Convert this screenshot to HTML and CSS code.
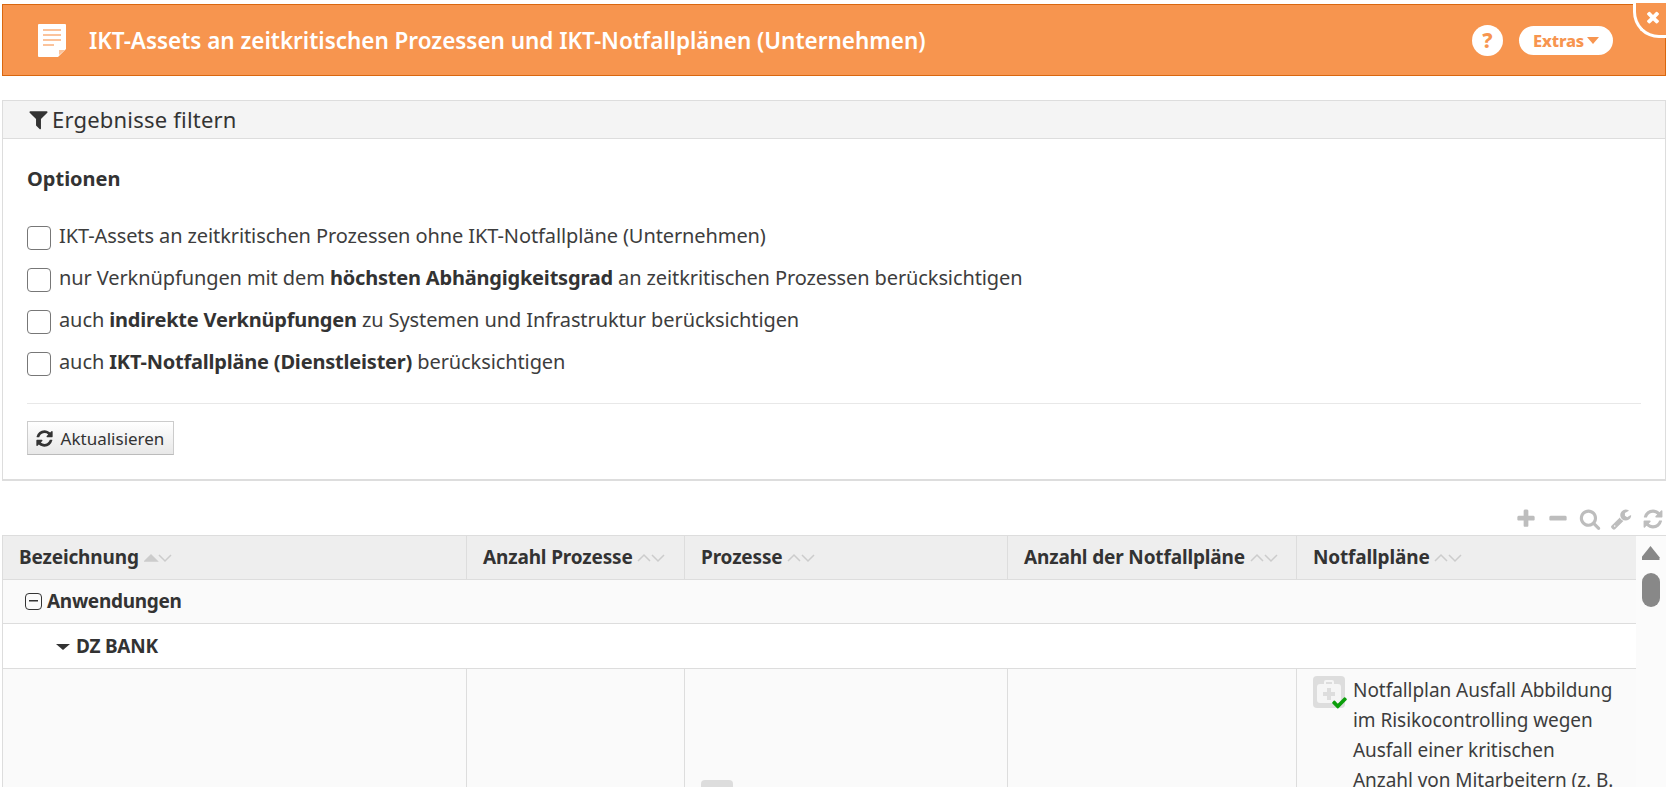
FILE: index.html
```html
<!DOCTYPE html>
<html lang="de">
<head>
<meta charset="utf-8">
<title>IKT-Assets</title>
<link rel="stylesheet" href="styles.css">
</head>
<body>
<svg class="defs" width="0" height="0" aria-hidden="true">
  <symbol id="i-refresh" viewBox="0 0 1792 1792"><path d="M1639 1056q0 5-1 7-64 268-268 434.5t-478 166.5q-146 0-282.5-55t-243.5-157l-129 129q-19 19-45 19t-45-19-19-45v-448q0-26 19-45t45-19h448q26 0 45 19t19 45-19 45l-137 137q71 66 161 102t187 36q134 0 250-65t186-179q11-17 53-117 8-23 30-23h192q13 0 22.5 9.5t9.5 22.5zm25-800v448q0 26-19 45t-45 19h-448q-26 0-45-19t-19-45 19-45l138-138q-148-137-349-137-134 0-250 65t-186 179q-11 17-53 117-8 23-30 23h-199q-13 0-22.5-9.5t-9.5-22.5v-7q65-268 270-434.5t480-166.5q146 0 284 55.5t245 156.5l130-129q19-19 45-19t45 19 19 45z"/></symbol>
  <symbol id="i-filter" viewBox="0 0 1792 1792"><path d="M1595 295q17 41-14 70l-493 493v742q0 42-39 59-13 5-25 5-27 0-45-19l-256-256q-19-19-19-45v-486l-493-493q-31-29-14-70 17-39 59-39h1280q42 0 59 39z"/></symbol>
  <symbol id="i-search" viewBox="0 0 1792 1792"><path d="M1216 832q0-185-131.5-316.5t-316.5-131.5-316.5 131.5-131.5 316.5 131.5 316.5 316.5 131.5 316.5-131.5 131.5-316.5zm512 832q0 52-38 90t-90 38q-54 0-90-38l-343-342q-179 124-399 124-143 0-273.5-55.5t-225-150-150-225-55.5-273.5 55.5-273.5 150-225 225-150 273.5-55.5 273.5 55.5 225 150 150 225 55.5 273.5q0 220-124 399l343 343q37 37 37 90z"/></symbol>
  <symbol id="i-wrench" viewBox="0 0 1792 1792"><path d="M448 1472q0-26-19-45t-45-19-45 19-19 45 19 45 45 19 45-19 19-45zm644-420l-682 682q-37 37-90 37-52 0-91-37l-106-108q-38-36-38-90 0-53 38-91l681-681q39 98 114.5 173.5t173.5 114.5zm634-435q0 39-23 106-47 134-164.5 217.5t-258.5 83.5q-185 0-316.5-131.5t-131.5-316.5 131.5-316.5 316.5-131.5q58 0 121.5 16.5t107.5 46.5q16 11 16 28t-16 28l-293 169v224l193 107q5-3 79-48.5t135.5-81 70.5-35.5q15 0 23.5 10t8.5 25z"/></symbol>
  <symbol id="i-plus" viewBox="0 0 1792 1792"><path d="M1600 736v192q0 40-28 68t-68 28h-416v416q0 40-28 68t-68 28h-192q-40 0-68-28t-28-68v-416h-416q-40 0-68-28t-28-68v-192q0-40 28-68t68-28h416v-416q0-40 28-68t68-28h192q40 0 68 28t28 68v416h416q40 0 68 28t28 68z"/></symbol>
  <symbol id="i-minus" viewBox="0 0 1792 1792"><path d="M1600 736v192q0 40-28 68t-68 28h-1216q-40 0-68-28t-28-68v-192q0-40 28-68t68-28h1216q40 0 68 28t28 68z"/></symbol>
  <symbol id="i-times" viewBox="0 0 1792 1792"><path d="M1490 1322q0 40-28 68l-136 136q-28 28-68 28t-68-28l-294-294-294 294q-28 28-68 28t-68-28l-136-136q-28-28-28-68t28-68l294-294-294-294q-28-28-28-68t28-68l136-136q28-28 68-28t68 28l294 294 294-294q28-28 68-28t68 28l136 136q28 28 28 68t-28 68l-294 294 294 294q28 28 28 68z"/></symbol>
  <symbol id="i-check" viewBox="0 0 1792 1792"><path d="M1671 566q0 40-28 68l-724 724-136 136q-28 28-68 28t-68-28l-136-136-362-362q-28-28-28-68t28-68l136-136q28-28 68-28t68 28l294 295 656-657q28-28 68-28t68 28l136 136q28 28 28 68z"/></symbol>
  <symbol id="i-sort" viewBox="0 0 28 14"><path d="M1 10 L7 4 L13 10"/><path d="M15 4 L21 10 L27 4"/></symbol>
  <symbol id="i-sort-asc" viewBox="0 0 28 14"><path class="filled" d="M1 10 L7 4 L13 10z"/><path d="M15 4 L21 10 L27 4"/></symbol>
</svg>

<header class="titlebar">
  <svg class="doc-icon" viewBox="0 0 28 33"><path class="doc-sheet" d="M1 0H27a1 1 0 0 1 1 1V25L20 33H1a1 1 0 0 1-1-1V1a1 1 0 0 1 1-1z"/><path class="doc-lines" d="M5 6H23M5 11H23M5 16H23M5 21H16"/><path class="doc-fold" d="M21 31V26H27z"/></svg>
  <h1 class="title">IKT-Assets an zeitkritischen Prozessen und IKT-Notfallplänen (Unternehmen)</h1>
  <div class="title-actions">
    <span class="help">?</span>
    <span class="extras">Extras<i class="caret-down"></i></span>
  </div>
  <span class="close"><svg class="close-x"><use href="#i-times"/></svg></span>
</header>

<section class="panel">
  <h2 class="panel-head"><svg class="filter-icon"><use href="#i-filter"/></svg>Ergebnisse filtern</h2>
  <div class="panel-body">
    <h3 class="options-title">Optionen</h3>
    <label class="option"><span class="box"></span><span>IKT-Assets an zeitkritischen Prozessen ohne IKT-Notfallpläne (Unternehmen)</span></label>
    <label class="option"><span class="box"></span><span>nur Verknüpfungen mit dem <b>höchsten Abhängigkeitsgrad</b> an zeitkritischen Prozessen berücksichtigen</span></label>
    <label class="option"><span class="box"></span><span>auch <b>indirekte Verknüpfungen</b> zu Systemen und Infrastruktur berücksichtigen</span></label>
    <label class="option"><span class="box"></span><span>auch <b>IKT-Notfallpläne (Dienstleister)</b> berücksichtigen</span></label>
    <hr class="rule">
    <button class="refresh-btn"><svg class="refresh-icon"><use href="#i-refresh"/></svg>Aktualisieren</button>
  </div>
</section>

<div class="toolbar">
  <svg class="tool"><use href="#i-plus"/></svg>
  <svg class="tool"><use href="#i-minus"/></svg>
  <svg class="tool"><use href="#i-search"/></svg>
  <svg class="tool"><use href="#i-wrench"/></svg>
  <svg class="tool"><use href="#i-refresh"/></svg>
</div>

<div class="grid-wrap">
  <table class="grid">
    <colgroup>
      <col class="c1"><col class="c2"><col class="c3"><col class="c4"><col class="c5">
    </colgroup>
    <thead>
      <tr>
        <th class="first">Bezeichnung <svg class="sort"><use href="#i-sort-asc"/></svg></th>
        <th>Anzahl Prozesse <svg class="sort"><use href="#i-sort"/></svg></th>
        <th>Prozesse <svg class="sort"><use href="#i-sort"/></svg></th>
        <th>Anzahl der Notfallpläne <svg class="sort"><use href="#i-sort"/></svg></th>
        <th>Notfallpläne <svg class="sort"><use href="#i-sort"/></svg></th>
      </tr>
    </thead>
    <tbody>
      <tr class="group"><td colspan="5"><span class="collapse"></span>Anwendungen</td></tr>
      <tr class="subgroup"><td colspan="5"><i class="caret-sub"></i>DZ BANK</td></tr>
      <tr class="data">
        <td></td>
        <td></td>
        <td class="proc-cell"><span class="proc-icon"></span><span class="proc-text">Abbildung</span></td>
        <td></td>
        <td class="plan-cell">
          <div class="plan">
            <span class="plan-icon">
              <svg class="kit" viewBox="0 0 32 32"><path d="M11 8V6a2 2 0 0 1 2-2h6a2 2 0 0 1 2 2v2h4a3 3 0 0 1 3 3v13a3 3 0 0 1-3 3H7a3 3 0 0 1-3-3V11a3 3 0 0 1 3-3zm2 0h6V6h-6z" fill-rule="evenodd"/><path class="kit-cross" d="M14 12h4v4h4v4h-4v4h-4v-4h-4v-4h4z"/></svg>
              <svg class="tick"><use href="#i-check"/></svg>
            </span>
            <span class="plan-text">Notfallplan Ausfall Abbildung im Risikocontrolling wegen Ausfall einer kritischen Anzahl von Mitarbeitern (z. B. Pandemie)</span>
          </div>
        </td>
      </tr>
    </tbody>
  </table>
  <div class="scroll">
    <i class="scroll-up"></i>
    <i class="scroll-thumb"></i>
  </div>
</div>
</body>
</html>
```

FILE: styles.css
```css
* { box-sizing: border-box; }
html, body { height: 100%; }
body {
  margin: 0;
  padding: 4px 1px 0 2px;
  overflow: hidden;
  background: #fff;
  color: #333;
  font-family: "Noto Sans", "Open Sans", sans-serif;
  font-size: 19px;
}
.defs { position: absolute; }

.titlebar {
  position: relative;
  height: 72px;
  display: flex;
  align-items: center;
  padding: 0 52px 0 35px;
  background: #f7954f;
  border: 1px solid #d9670f;
  color: #fff;
}
.doc-icon { width: 28px; height: 33px; flex: none; margin-right: 23px; }
.doc-sheet { fill: #fff; }
.doc-lines { stroke: #fbc39b; stroke-width: 2; fill: none; }
.doc-fold { fill: #fbc39b; }
.title { flex: 1; margin: 0; font-size: 22.5px; font-weight: 600; letter-spacing: -0.03px; }
.title-actions { display: flex; align-items: center; gap: 16px; }
.help {
  width: 31px; height: 31px; border-radius: 50%;
  display: flex; align-items: center; justify-content: center;
  background: #fff; color: #f7954f;
  font-size: 21px; font-weight: 800;
}
.extras {
  width: 94px; height: 29px; border-radius: 15px;
  display: flex; align-items: center; justify-content: center;
  background: #fff; color: #f7954f;
  font-size: 16.5px; font-weight: 800; letter-spacing: -0.2px;
}
.caret-down {
  margin-left: 3px;
  border: 6px solid transparent;
  border-top: 7px solid #f7954f;
  border-bottom: 0;
}
.close {
  position: absolute;
  top: -2px; right: -1px;
  width: 33px; height: 35px;
  display: flex; align-items: center; justify-content: center;
  background: #f7954f;
  border-left: 3px solid #fff;
  border-bottom: 3px solid #fff;
  border-bottom-left-radius: 26px;
}
.close-x { width: 18px; height: 18px; fill: #fff; margin: 0 0 4px 4px; }

.panel {
  margin-top: 24px;
  height: 381px;
  border: 1px solid #ddd;
  border-bottom-width: 2px;
}
.panel-head {
  height: 38px;
  margin: 0;
  padding: 0 0 1px 24px;
  display: flex;
  align-items: center;
  background: #f4f4f4;
  border-bottom: 1px solid #ddd;
  font-size: 22px;
  font-weight: 400;
  letter-spacing: 0.2px;
  color: #333;
}
.filter-icon { width: 23px; height: 23px; fill: #333; margin-right: 2px; }
.panel-body { padding: 28px 24px 0; }
.options-title { margin: 0 0 23px; font-size: 20px; line-height: 24px; font-weight: 700; }
.option { display: flex; align-items: center; gap: 8px; height: 42px; font-size: 20px; letter-spacing: -0.1px; color: #3d3d3d; }
.option b { font-weight: 700; color: #333; letter-spacing: -0.2px; }
.box {
  width: 24px; height: 24px; flex: none;
  margin-top: 5px;
  border: 1px solid #777;
  border-radius: 4px;
  background: #fff;
}
.rule { margin: 21px 0 17px; border: 0; border-top: 1px solid #e8e8e8; }
.refresh-btn {
  width: 147px; height: 34px;
  padding: 0 2px 0 0;
  display: flex; align-items: center; justify-content: center; gap: 7px;
  background: linear-gradient(#fff, #e8e8e8);
  border: 1px solid #ccc;
  border-bottom-color: #bbb;
  color: #333;
  font: inherit;
  font-size: 17px;
}
.refresh-icon { width: 19px; height: 19px; fill: #333; }

.toolbar {
  height: 54px;
  padding: 27px 2px 0 0;
  display: flex;
  justify-content: flex-end;
  gap: 9.7px;
}
.tool { width: 22px; height: 22px; fill: #bdbdbd; }

.grid-wrap { display: flex; height: 300px; overflow: hidden; }
.grid {
  flex: none;
  width: 1633px;
  height: 600px;
  table-layout: fixed;
  border-collapse: collapse;
  border: 1px solid #ddd;
  border-right: 0;
}
.c1 { width: 464px; }
.c2 { width: 218px; }
.c3 { width: 323px; }
.c4 { width: 289px; }
.c5 { width: 339px; }
th {
  height: 44px;
  padding: 0 16px 2px;
  text-align: left;
  font-size: 19px;
  font-weight: 700;
  letter-spacing: -0.15px;
  background: #eee;
  border-left: 1px solid #ddd;
  border-bottom: 1px solid #ddd;
  white-space: nowrap;
}
th.first { border-left: 0; }
.sort { width: 28px; height: 14px; fill: none; stroke: #ccc; stroke-width: 1.5; vertical-align: -1px; }
.filled { fill: #ccc; }
.group td {
  height: 44px;
  padding: 0 0 2px 22px;
  background: #fafafa;
  border-bottom: 1px solid #ddd;
  font-weight: 700;
  font-size: 19px;
  letter-spacing: -0.3px;
}
.collapse {
  display: inline-block;
  width: 17px; height: 17px;
  margin-right: 5px;
  vertical-align: -2px;
  border: 1.5px solid #333;
  border-radius: 4px;
  background: linear-gradient(#333, #333) center / 9px 1.5px no-repeat;
}
.subgroup td {
  height: 45px;
  padding: 0 0 0 53px;
  background: #fff;
  border-bottom: 1px solid #ddd;
  font-weight: 700;
  font-size: 19px;
  letter-spacing: -0.25px;
}
.caret-sub {
  display: inline-block;
  margin-right: 6px;
  vertical-align: 3px;
  border: 7px solid transparent;
  border-top: 6px solid #333;
  border-bottom: 0;
}
.data td {
  vertical-align: top;
  background: #fafafa;
  border-left: 1px solid #ddd;
}
.data td:first-child { border-left: 0; }
td.proc-cell { padding: 111px 16px 0; }
.proc-icon {
  display: inline-block;
  width: 32px; height: 32px;
  margin-right: 8px;
  vertical-align: top;
  background: #ddd;
  border-radius: 4px;
}
.proc-text { line-height: 32px; font-size: 19px; }
td.plan-cell { padding: 6px 22px 0 16px; }
.plan { display: flex; gap: 8px; font-size: 19px; letter-spacing: -0.05px; line-height: 30px; color: #3d3d3d; }
.plan-icon { position: relative; flex: none; width: 32px; height: 32px; background: #ddd; border-radius: 4px; margin-top: 1px; }
.kit { display: block; width: 32px; height: 32px; fill: #f5f5f5; }
.kit-cross { fill: #ddd; }
.tick { position: absolute; right: -3px; bottom: -3px; width: 17px; height: 17px; fill: #0a9e0a; }
.plan-text { flex: 1; }

.scroll { flex: none; width: 31px; height: 100%; background: #fbfbfb; position: relative; border-right: 1px solid #ddd; border-top: 1px solid #ddd; }
.scroll-up {
  display: block;
  width: 18px; height: 14px;
  margin: 10px 0 0 6px;
  background: #888;
  clip-path: polygon(50% 0, 100% 80%, 100% 100%, 0 100%, 0 80%);
}
.scroll-thumb {
  display: block;
  width: 18px; height: 34px;
  margin: 13px 0 0 6px;
  background: #888;
  border-radius: 9px;
}
```
